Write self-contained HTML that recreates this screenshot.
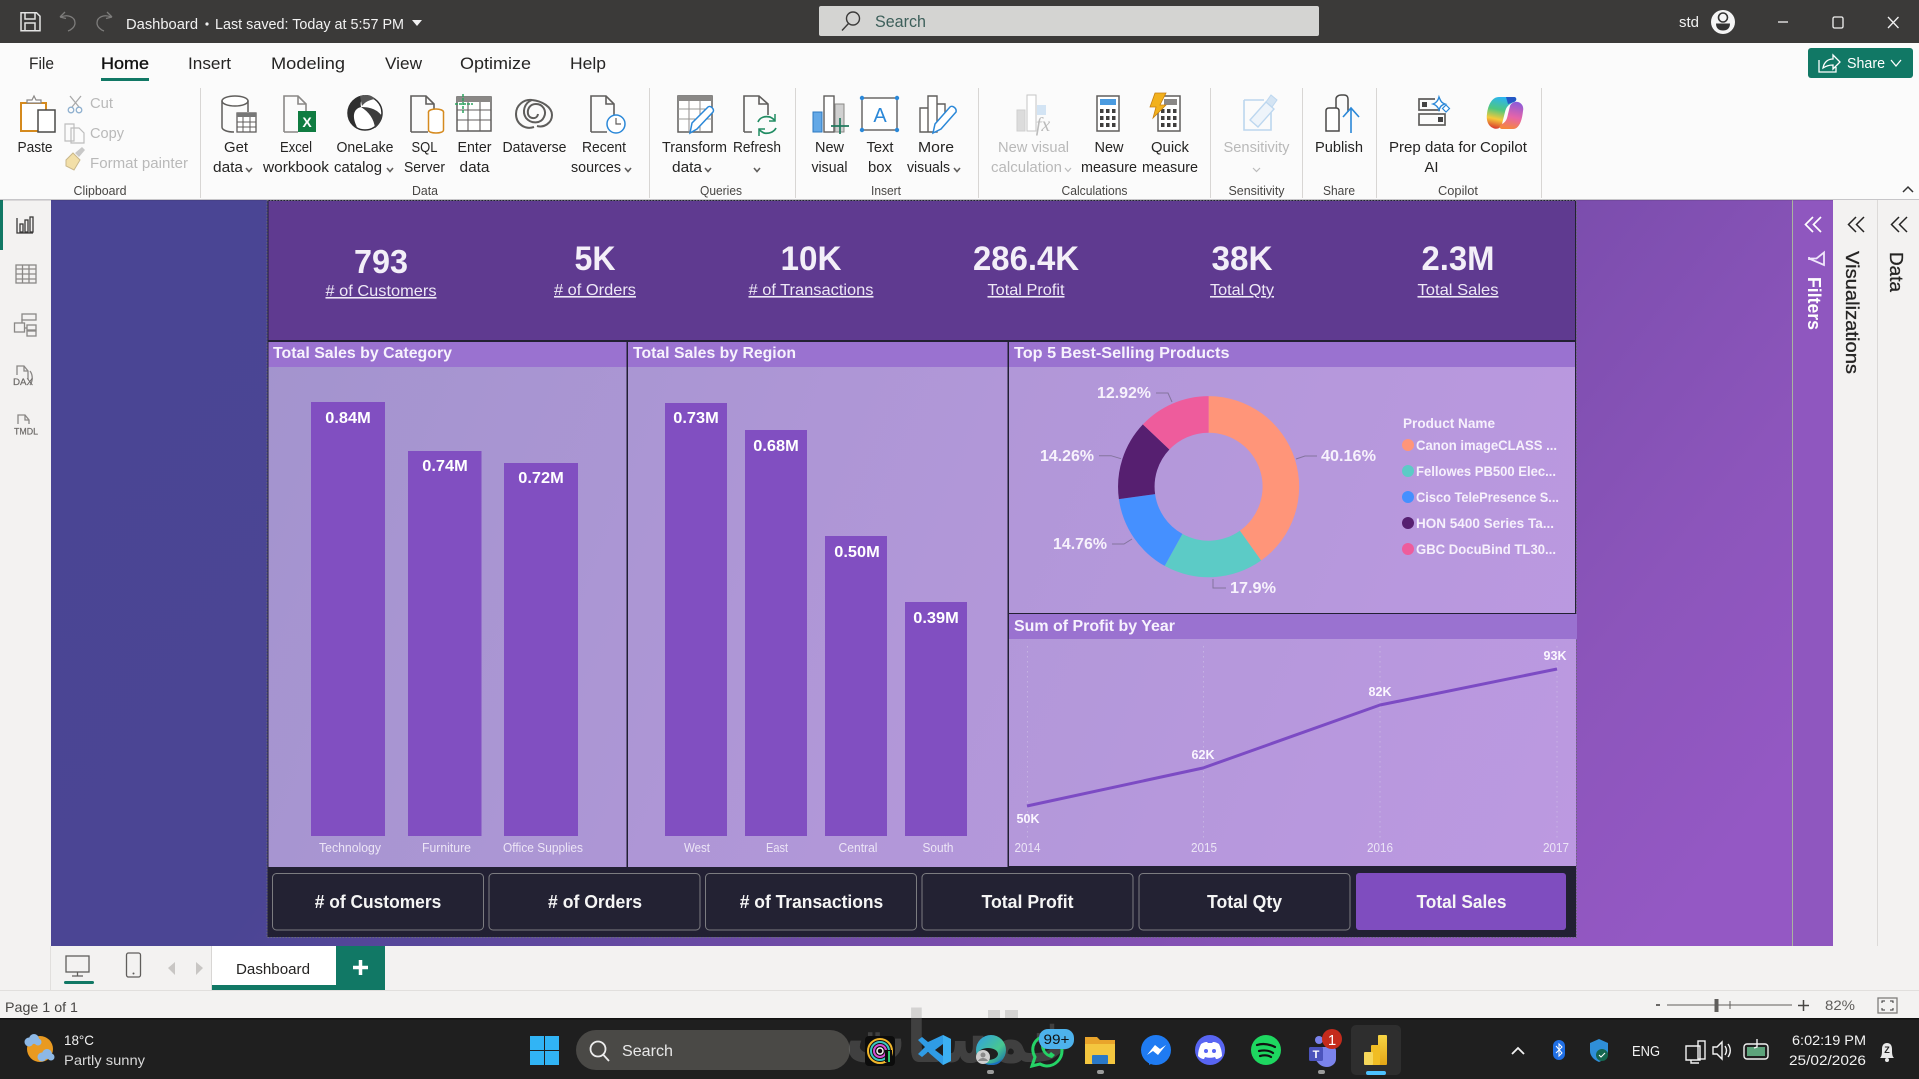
<!DOCTYPE html>
<html lang="en">
<head>
<meta charset="utf-8">
<title>Dashboard - Power BI Desktop</title>
<style>
html,body{margin:0;padding:0;width:1919px;height:1079px;overflow:hidden;background:#f3f2f1}
svg{display:block;position:absolute;left:0;top:0}
text{font-family:"Liberation Sans","DejaVu Sans",sans-serif}
.r{font-size:14.5px;fill:#252423}
.m{text-anchor:middle}
.d{fill:#b9b9b9}
.g{font-size:13px;fill:#484644;text-anchor:middle}
.tab{font-size:17px;fill:#252423}
.w{fill:#fff}
.kv{font-size:34px;font-weight:bold;fill:#f3eff8;text-anchor:middle}
.kl{font-size:16px;fill:#eee8f6;text-anchor:middle;text-decoration:underline}
.pt{font-size:15.5px;font-weight:bold;fill:#f7f2fd}
.bl{font-size:16px;font-weight:bold;fill:#fff;text-anchor:middle}
.ax{font-size:12.5px;fill:#ece5f6;text-anchor:middle}
.dl{font-size:16px;font-weight:bold;fill:#f7f2fc}
.lg{font-size:13.5px;font-weight:bold;fill:#f6f0fc}
.ll{font-size:13px;font-weight:bold;fill:#fbf7ff;text-anchor:middle}
.btn{font-size:18px;font-weight:bold;fill:#f5f5f5;text-anchor:middle}
.tb{font-size:14.5px;fill:#f2f2f2}
.i{fill:none;stroke:#605e5c;stroke-width:1.6}
.il{fill:none;stroke:#c4c4c4;stroke-width:1.4}
.ic{fill:none;stroke:#6d6b69;stroke-width:1.4}
.tr{fill:none;stroke:#f2f2f2;stroke-width:1.4}
</style>
</head>
<body>
<svg xmlns="http://www.w3.org/2000/svg" width="1919" height="1079" viewBox="0 0 1919 1079">
<defs>
<linearGradient id="cv" gradientUnits="userSpaceOnUse" x1="0" y1="0" x2="1492" y2="1164">
<stop offset="0" stop-color="#4a4594"/><stop offset=".4" stop-color="#4b4594"/><stop offset=".72" stop-color="#7b4dad"/><stop offset=".88" stop-color="#8c55bb"/><stop offset="1" stop-color="#9458c4"/>
</linearGradient>
<linearGradient id="bd" gradientUnits="userSpaceOnUse" x1="268" y1="342" x2="1576" y2="866">
<stop offset="0" stop-color="#a394ce"/><stop offset=".5" stop-color="#b197d8"/><stop offset="1" stop-color="#bc99e1"/>
</linearGradient>
<linearGradient id="pb" x1="0" y1="0" x2="0" y2="1"><stop offset="0" stop-color="#f6d444"/><stop offset="1" stop-color="#e3a516"/></linearGradient>
<linearGradient id="cp1" x1=".5" y1="0" x2=".3" y2="1"><stop offset="0" stop-color="#2bb4f2"/><stop offset=".4" stop-color="#4fc77f"/><stop offset=".7" stop-color="#f6c93a"/><stop offset="1" stop-color="#d8382f"/></linearGradient>
<linearGradient id="cp2" x1=".6" y1="0" x2=".4" y2="1"><stop offset="0" stop-color="#8d5bd8"/><stop offset=".55" stop-color="#e764a8"/><stop offset="1" stop-color="#f5873d"/></linearGradient>
<linearGradient id="ed" x1="0" y1="0" x2="1" y2="1"><stop offset="0" stop-color="#2f9fe6"/><stop offset=".6" stop-color="#48c78f"/><stop offset="1" stop-color="#1463b0"/></linearGradient>
</defs>

<!-- Title bar -->
<rect x="0" y="0" width="1919" height="43" fill="#3b3a39"/>
<g fill="none" stroke="#e3e3e3" stroke-width="1.5">
<path d="M21 12.7h15.5l3.5 3.5v14.6H21z"/><path d="M25 13v6h10v-6"/><path d="M25 31v-8h10v8"/>
</g>
<g fill="none" stroke="#7d7c7b" stroke-width="1.3">
<path d="M60 17l5-5M60 17l6 1.500M61 17c7-3 14 0 14 6 0 4-4 7-7 8"/>
<path d="M112 17l-5-5M112 17l-6 1.500M111 17c-7-3-14 0-14 6 0 4 4 7 7 8"/>
</g>
<text x="126" y="29" class="tb" textLength="72" lengthAdjust="spacingAndGlyphs">Dashboard</text>
<circle cx="207" cy="24" r="1.600" fill="#f2f2f2"/>
<text x="215" y="29" class="tb" textLength="189" lengthAdjust="spacingAndGlyphs">Last saved: Today at 5:57 PM</text>
<polygon points="412,20 422,20 417,26" fill="#f2f2f2"/>

<rect x="819" y="6" width="500" height="30" rx="2" fill="#d4d4d2"/>
<circle cx="853" cy="18.500" r="6.500" fill="none" stroke="#3b3a39" stroke-width="1.4"/>
<path d="M848.500 23.500L842 30.500" stroke="#3b3a39" stroke-width="1.4"/>
<text x="875" y="27" font-size="16.5" fill="#3d5f5a" textLength="51" lengthAdjust="spacingAndGlyphs">Search</text>

<text x="1679" y="27" class="tb" textLength="20" lengthAdjust="spacingAndGlyphs">std</text>
<circle cx="1723" cy="22" r="12" fill="#f5f5f5"/>
<circle cx="1723" cy="17.500" r="4.500" fill="none" stroke="#333" stroke-width="1.600"/>
<path d="M1716 23.500h14c0 5-3 7-7 7s-7-2-7-7z" fill="#333"/>
<path d="M1778 22h10" stroke="#f2f2f2" stroke-width="1.300"/>
<rect x="1833" y="17" width="10" height="11" rx="1.500" fill="none" stroke="#f2f2f2" stroke-width="1.300"/>
<path d="M1888 17l10.500 11M1898.500 17l-10.500 11" stroke="#f2f2f2" stroke-width="1.300"/>

<!-- Ribbon -->
<rect x="0" y="43" width="1919" height="157" fill="#fbfbfb"/>
<text x="29" y="69" class="tab" textLength="25" lengthAdjust="spacingAndGlyphs">File</text>
<text x="101" y="69" class="tab" style="fill:#111;stroke:#111;stroke-width:.35" textLength="48" lengthAdjust="spacingAndGlyphs">Home</text>
<rect x="101" y="78" width="48" height="3" fill="#117865"/>
<text x="188" y="69" class="tab" textLength="43" lengthAdjust="spacingAndGlyphs">Insert</text>
<text x="271" y="69" class="tab" textLength="74" lengthAdjust="spacingAndGlyphs">Modeling</text>
<text x="385" y="69" class="tab" textLength="37" lengthAdjust="spacingAndGlyphs">View</text>
<text x="460" y="69" class="tab" textLength="71" lengthAdjust="spacingAndGlyphs">Optimize</text>
<text x="570" y="69" class="tab" textLength="36" lengthAdjust="spacingAndGlyphs">Help</text>

<rect x="1808" y="48" width="105" height="30" rx="3" fill="#117865"/>
<path d="M1819 60v12h17v-5M1823 68c1-6 5-9 10-9v-4l7 7-7 7v-4c-4 0-7 1-10 3z" fill="none" stroke="#fff" stroke-width="1.300"/>
<text x="1847" y="68" font-size="14.5" fill="#fff" textLength="38" lengthAdjust="spacingAndGlyphs">Share</text>
<path d="M1891 60l5 6 5-6" fill="none" stroke="#fff" stroke-width="1.300"/>

<!-- ribbon separators -->
<g fill="#d8d6d4">
<rect x="200" y="88" width="1" height="110"/><rect x="649" y="88" width="1" height="110"/><rect x="795" y="88" width="1" height="110"/><rect x="978" y="88" width="1" height="110"/><rect x="1210" y="88" width="1" height="110"/><rect x="1302" y="88" width="1" height="110"/><rect x="1376" y="88" width="1" height="110"/><rect x="1541" y="88" width="1" height="110"/>
</g>

<!-- Paste -->
<path d="M21 103h25v28H21z" fill="#fff" stroke="#d58a1e" stroke-width="2"/>
<path d="M27 103v-3h5l2-4 2 4h5v3z" fill="#fff" stroke="#8a8886" stroke-width="1.200"/>
<rect x="38" y="110" width="17" height="22" fill="#fff" stroke="#4b4a49" stroke-width="1.500"/>
<text x="35" y="152" class="r m" textLength="35" lengthAdjust="spacingAndGlyphs">Paste</text>
<!-- Cut/Copy/Painter -->
<path d="M70 96l9 11M81 96l-9 11" stroke="#a9a9a9" stroke-width="1.300" fill="none"/>
<circle cx="71" cy="110" r="2.800" fill="none" stroke="#8fb0cf" stroke-width="1.300"/><circle cx="79" cy="110" r="2.800" fill="none" stroke="#8fb0cf" stroke-width="1.300"/>
<text x="90" y="108" class="r d" textLength="23" lengthAdjust="spacingAndGlyphs">Cut</text>
<path d="M65 124h9v17h-9zM71 128h8l5 5v10H71z" fill="#fbfbfb" stroke="#bdbdbd" stroke-width="1.200"/>
<text x="90" y="138" class="r d" textLength="34" lengthAdjust="spacingAndGlyphs">Copy</text>
<path d="M66 160l7-7 7 7-6 10-8-4z" fill="#f2dfa8" stroke="#c9b78a" stroke-width="1"/><path d="M75 153l7-6 3 3-6 7z" fill="#c8c8c8"/>
<text x="90" y="168" class="r d" textLength="98" lengthAdjust="spacingAndGlyphs">Format painter</text>
<text x="100" y="195" class="g" textLength="53" lengthAdjust="spacingAndGlyphs">Clipboard</text>

<!-- Get data -->
<ellipse cx="235" cy="101" rx="13" ry="5" fill="#fff" stroke="#605e5c" stroke-width="1.500"/>
<path d="M222 101v26c0 3 5 5 12 5M248 101v11" fill="none" stroke="#605e5c" stroke-width="1.500"/>
<rect x="237" y="113" width="19" height="19" fill="#fff" stroke="#605e5c" stroke-width="1.300"/>
<rect x="237" y="113" width="19" height="4" fill="#777"/>
<path d="M237 122h19M237 127h19M243 117v15M250 117v15" stroke="#605e5c" stroke-width="1"/>
<text x="236" y="152" class="r m" textLength="24" lengthAdjust="spacingAndGlyphs">Get</text>
<text x="213" y="172" class="r" textLength="30" lengthAdjust="spacingAndGlyphs">data</text>
<path d="M246 168l3 3.500 3-3.500" class="i" stroke-width="1.200"/>
<!-- Excel -->
<path d="M284 132V96h14l8 8v8M284 132h14" class="i" style="stroke:#8a8886"/><path d="M298 96v8h8" class="i" style="stroke:#8a8886"/>
<rect x="298" y="111" width="18" height="21" fill="#107c41"/>
<text x="307" y="127" font-size="14" font-weight="bold" class="m w">X</text>
<text x="296" y="152" class="r m" textLength="32" lengthAdjust="spacingAndGlyphs">Excel</text>
<text x="296" y="172" class="r m" textLength="66" lengthAdjust="spacingAndGlyphs">workbook</text>
<!-- OneLake -->
<circle cx="365" cy="113" r="17" fill="#fff" stroke="#2d2d2d" stroke-width="1.500"/>
<path d="M348 113c0-10 8-17 16-18-3 5-4 8-3 12-8 2-9 10-4 20-6-2-9-8-9-14z" fill="#2f2f2f"/>
<path d="M361 107c8 0 16 2 21 9-1 5-3 9-7 12-1-9-6-16-14-21z" fill="#3d3d3d"/>
<path d="M360 96c8-2 11-1 15 3-6 1-10 3-13 7z" fill="#555"/>
<text x="365" y="152" class="r m" textLength="57" lengthAdjust="spacingAndGlyphs">OneLake</text>
<text x="334" y="172" class="r" textLength="48" lengthAdjust="spacingAndGlyphs">catalog</text>
<path d="M387 168l3 3.500 3-3.500" class="i" stroke-width="1.200"/>
<!-- SQL -->
<path d="M411 132V96h15l8 8v8M411 132h17" class="i"/><path d="M426 96v8h8" class="i"/>
<ellipse cx="436" cy="112" rx="7.500" ry="3" fill="#fff" stroke="#d58a1e" stroke-width="1.500"/>
<path d="M428.500 112v18c0 2 3.500 3 7.500 3s7.500-1 7.500-3v-18" fill="#fff" stroke="#d58a1e" stroke-width="1.500"/>
<text x="424.500" y="152" class="r m" textLength="26" lengthAdjust="spacingAndGlyphs">SQL</text>
<text x="424.500" y="172" class="r m" textLength="41" lengthAdjust="spacingAndGlyphs">Server</text>
<!-- Enter data -->
<rect x="457" y="97" width="34" height="34" fill="#fff" stroke="#605e5c" stroke-width="1.500"/>
<rect x="457" y="97" width="34" height="5" fill="#8a8886"/>
<path d="M457 110h34M457 120h34M468 102v29M480 102v29" stroke="#605e5c" stroke-width="1.100"/>
<path d="M463 94v20M455 104h18" stroke="#2ca25f" stroke-width="1.500" stroke-dasharray="3 1"/>
<text x="474.500" y="152" class="r m" textLength="34" lengthAdjust="spacingAndGlyphs">Enter</text>
<text x="474.500" y="172" class="r m" textLength="30" lengthAdjust="spacingAndGlyphs">data</text>
<!-- Dataverse -->
<g fill="none" stroke="#5e5d5b" stroke-width="2">
<path d="M534 127c-9 3-18-3-18-13 0-9 8-15 16-14 10 1 20 7 20 15 0 8-8 13-15 11"/>
<path d="M532 100c-8 3-10 12-6 18 5 6 15 6 18-1 3-6-1-13-8-13-6 0-9 5-8 10 1 5 9 6 10 0"/>
</g>
<text x="534.500" y="152" class="r m" textLength="64" lengthAdjust="spacingAndGlyphs">Dataverse</text>
<!-- Recent -->
<path d="M591 132V96h15l8 8v13M591 132h16" class="i"/><path d="M606 96v8h8" class="i"/>
<circle cx="616" cy="124" r="9" fill="#fff" stroke="#2b88d8" stroke-width="1.500"/>
<path d="M616 118v6h5" stroke="#605e5c" stroke-width="1.200" fill="none"/>
<text x="604" y="152" class="r m" textLength="44" lengthAdjust="spacingAndGlyphs">Recent</text>
<text x="571" y="172" class="r" textLength="50" lengthAdjust="spacingAndGlyphs">sources</text>
<path d="M625 168l3 3.500 3-3.500" class="i" stroke-width="1.200"/>
<!-- Transform -->
<rect x="678" y="96" width="34" height="36" fill="#fff" stroke="#605e5c" stroke-width="1.500"/>
<rect x="678" y="96" width="34" height="5" fill="#8a8886"/>
<path d="M678 109h34M678 119h34M689 101v30M700 101v30" stroke="#9a9896" stroke-width="1.100"/>
<path d="M690 133l2-10 16-16c2-2 7 2 5 5l-16 17z" fill="#fff" stroke="#2b88d8" stroke-width="1.500"/>
<text x="694.500" y="152" class="r m" textLength="65" lengthAdjust="spacingAndGlyphs">Transform</text>
<text x="687" y="172" class="r m" textLength="30" lengthAdjust="spacingAndGlyphs">data</text>
<path d="M705 168l3 3.500 3-3.500" class="i" stroke-width="1.200"/>
<!-- Refresh -->
<path d="M744 132V96h15l9 8v11M744 132h8" class="i"/><path d="M759 96v8h9" class="i"/>
<path d="M758 122c2-5 7-6 12-5 2 1 4 2 5 4M776 128c-2 4-7 6-12 5-2-1-4-2-5-4" fill="none" stroke="#218c63" stroke-width="1.700"/>
<path d="M775 114v7h-6M759 136v-7h6" fill="none" stroke="#218c63" stroke-width="1.500"/>
<text x="757" y="152" class="r m" textLength="48" lengthAdjust="spacingAndGlyphs">Refresh</text>
<path d="M754 168l3 3.500 3-3.500" class="i" stroke-width="1.200"/>
<text x="425" y="195" class="g" textLength="26" lengthAdjust="spacingAndGlyphs">Data</text>
<text x="721" y="195" class="g" textLength="42" lengthAdjust="spacingAndGlyphs">Queries</text>

<!-- New visual -->
<rect x="813" y="112" width="9" height="20" fill="#63a8e6" stroke="#2b79c2"/>
<rect x="824" y="96" width="10" height="36" fill="#fff" stroke="#605e5c" stroke-width="1.400"/>
<rect x="835" y="104" width="9" height="28" fill="#d0d0d0" stroke="#8a8886"/>
<path d="M840 118v16M831 126h18" stroke="#217a5e" stroke-width="1.700"/>
<text x="829.500" y="152" class="r m" textLength="29" lengthAdjust="spacingAndGlyphs">New</text>
<text x="829.500" y="172" class="r m" textLength="36" lengthAdjust="spacingAndGlyphs">visual</text>
<!-- Text box -->
<rect x="862" y="98" width="35" height="32" fill="#fff" stroke="#605e5c" stroke-width="1.400"/>
<g fill="#2b88d8"><circle cx="862" cy="98" r="2.200"/><circle cx="897" cy="98" r="2.200"/><circle cx="862" cy="130" r="2.200"/><circle cx="897" cy="130" r="2.200"/></g>
<text x="880" y="122" font-size="20" fill="#2b88d8" class="m">A</text>
<text x="880" y="152" class="r m" textLength="27" lengthAdjust="spacingAndGlyphs">Text</text>
<text x="880" y="172" class="r m" textLength="24" lengthAdjust="spacingAndGlyphs">box</text>
<!-- More visuals -->
<path d="M920 132v-24h8v24zM928 132V96h9v36zM937 132v-28h8v14" fill="#fff" stroke="#605e5c" stroke-width="1.400"/>
<path d="M933 133l2-9 15-17c2-2 7 1 6 5l-15 17z" fill="#fff" stroke="#2b88d8" stroke-width="1.500"/>
<text x="936" y="152" class="r m" textLength="36" lengthAdjust="spacingAndGlyphs">More</text>
<text x="907" y="172" class="r" textLength="43" lengthAdjust="spacingAndGlyphs">visuals</text>
<path d="M954 168l3 3.500 3-3.500" class="i" stroke-width="1.200"/>
<text x="886" y="195" class="g" textLength="30" lengthAdjust="spacingAndGlyphs">Insert</text>
<!-- New visual calc -->
<rect x="1017" y="110" width="8" height="21" fill="#dcdcdc" stroke="#cfcfcf"/>
<rect x="1027" y="95" width="9" height="36" fill="#fff" stroke="#c6c6c6"/>
<rect x="1037" y="105" width="9" height="10" fill="#d3e4f4"/>
<text x="1043" y="131" font-size="20" font-style="italic" fill="#bcbcbc" class="m" style="font-family:'Liberation Serif',serif">fx</text>
<text x="1033.500" y="152" class="r m d" textLength="71" lengthAdjust="spacingAndGlyphs">New visual</text>
<text x="991" y="172" class="r d" textLength="71" lengthAdjust="spacingAndGlyphs">calculation</text>
<path d="M1065 168l3 3.500 3-3.500" fill="none" stroke="#bbb" stroke-width="1.200"/>
<!-- New measure -->
<rect x="1097" y="96" width="22" height="35" fill="#fff" stroke="#605e5c" stroke-width="1.500"/>
<rect x="1100" y="99" width="16" height="6" fill="#4a9be0"/>
<g fill="#3f3e3d"><rect x="1100" y="109" width="3.500" height="4"/><rect x="1106" y="109" width="3.500" height="4"/><rect x="1112" y="109" width="3.500" height="4"/><rect x="1100" y="116" width="3.500" height="4"/><rect x="1106" y="116" width="3.500" height="4"/><rect x="1112" y="116" width="3.500" height="4"/><rect x="1100" y="123" width="3.500" height="4"/><rect x="1106" y="123" width="3.500" height="4"/><rect x="1112" y="123" width="3.500" height="4"/></g>
<text x="1109" y="152" class="r m" textLength="29" lengthAdjust="spacingAndGlyphs">New</text>
<text x="1109" y="172" class="r m" textLength="56" lengthAdjust="spacingAndGlyphs">measure</text>
<!-- Quick measure -->
<rect x="1158" y="96" width="22" height="35" fill="#fff" stroke="#605e5c" stroke-width="1.500"/>
<rect x="1164" y="99" width="13" height="6" fill="#8a8886"/>
<g fill="#3f3e3d"><rect x="1161" y="109" width="3.500" height="4"/><rect x="1167" y="109" width="3.500" height="4"/><rect x="1173" y="109" width="3.500" height="4"/><rect x="1161" y="116" width="3.500" height="4"/><rect x="1167" y="116" width="3.500" height="4"/><rect x="1173" y="116" width="3.500" height="4"/><rect x="1161" y="123" width="3.500" height="4"/><rect x="1167" y="123" width="3.500" height="4"/><rect x="1173" y="123" width="3.500" height="4"/></g>
<polygon points="1155,93 1166,93 1160,105 1166,105 1153,118 1156,107 1150,107" fill="#f2b11d" stroke="#c77f0f" stroke-width=".8"/>
<text x="1170" y="152" class="r m" textLength="38" lengthAdjust="spacingAndGlyphs">Quick</text>
<text x="1170" y="172" class="r m" textLength="56" lengthAdjust="spacingAndGlyphs">measure</text>
<text x="1094.500" y="195" class="g" textLength="66" lengthAdjust="spacingAndGlyphs">Calculations</text>
<!-- Sensitivity -->
<path d="M1244 100h20M1244 100v30h27v-18" fill="none" stroke="#bcd6ee" stroke-width="1.600"/>
<path d="M1250 120l16-18 8 7-16 18z" fill="#eef4fa" stroke="#bdd7ef" stroke-width="1.400"/>
<path d="M1266 102l5-7 6 5-5 7z" fill="#d4e4f3" stroke="#bdd7ef"/>
<text x="1256.500" y="152" class="r m d" textLength="66" lengthAdjust="spacingAndGlyphs">Sensitivity</text>
<path d="M1253 168l3.500 3.500 3.500-3.500" fill="none" stroke="#bbb" stroke-width="1.200"/>
<text x="1256.500" y="195" class="g" textLength="56" lengthAdjust="spacingAndGlyphs">Sensitivity</text>
<!-- Publish -->
<path d="M1326 131v-20c0-2 1-3 3-3h7c2 0 3 1 3 3v20z" fill="#fff" stroke="#4a4948" stroke-width="1.500"/>
<path d="M1336 108V99c0-2 2-4 5-4h3c3 0 4 2 4 4v13" fill="none" stroke="#4a4948" stroke-width="1.500"/>
<path d="M1351 133v-24M1343 117l8-9 8 9" fill="none" stroke="#2b88d8" stroke-width="1.600"/>
<text x="1339" y="152" class="r m" textLength="48" lengthAdjust="spacingAndGlyphs">Publish</text>
<text x="1339" y="195" class="g" textLength="32" lengthAdjust="spacingAndGlyphs">Share</text>
<!-- Prep data -->
<path d="M1435 99h-16v11h21" fill="none" stroke="#605e5c" stroke-width="1.700"/><rect x="1422" y="102" width="5" height="5" fill="#444"/>
<rect x="1419" y="114" width="26" height="11" fill="none" stroke="#605e5c" stroke-width="1.700"/><rect x="1438" y="117" width="5" height="5" fill="#444"/>
<path d="M1439 97c2 5 3 6 6 7-4 1-5 3-6 6-1-3-3-5-6-6 3-1 5-3 6-7z" fill="#fff" stroke="#2b88d8" stroke-width="1.400"/>
<path d="M1446 105l3.500 3.500-3.500 3.500-3.500-3.500z" fill="#fff" stroke="#2b88d8" stroke-width="1.200"/>
<text x="1389" y="152" class="r" textLength="87" lengthAdjust="spacingAndGlyphs">Prep data for</text>
<text x="1431.500" y="172" class="r m" textLength="14" lengthAdjust="spacingAndGlyphs">AI</text>
<!-- Copilot -->
<path d="M1499 97h15c3 0 3 4 0 5-5 2-8 5-9 10l-3 12c-1 4-5 6-9 4-5-2-7-8-6-14 1-9 5-17 12-17z" fill="url(#cp1)"/>
<path d="M1513 129h-11c-3 0-3-4 0-5 4-2 5-5 6-10l2-8c1-3 5-5 8-4 4 1 6 5 5 9-1 10-4 18-10 18z" fill="url(#cp2)"/>
<path d="M1506 97h8c3 0 3 4 0 5l-6 2z" fill="#2457c5"/>
<text x="1480" y="152" class="r" textLength="47" lengthAdjust="spacingAndGlyphs">Copilot</text>
<text x="1458" y="195" class="g" textLength="40" lengthAdjust="spacingAndGlyphs">Copilot</text>
<path d="M1903 192l5-5 5 5" fill="none" stroke="#333" stroke-width="1.500"/>

<!-- Left rail -->
<rect x="0" y="200" width="51" height="746" fill="#f3f2f1"/>
<rect x="0" y="200" width="3" height="50" fill="#117865"/>
<g fill="none" stroke="#3b3a39" stroke-width="1.300">
<path d="M17 218v15h16"/><rect x="20" y="224" width="3" height="8"/><rect x="25" y="220" width="3" height="12"/><rect x="30" y="217" width="3" height="15"/>
</g>
<g style="fill:none;stroke:#8a8886;stroke-width:1.300">
<rect x="16" y="265" width="20" height="18"/><path d="M16 269h20M16 274h20M16 279h20M22.500 265v18M29 265v18"/>
<rect x="22" y="314" width="14" height="6"/><rect x="14.500" y="323" width="10" height="9"/><rect x="27" y="325" width="9" height="5"/><rect x="27" y="331" width="9" height="5"/><path d="M22 319v4M24 328h3"/>
<path d="M17 375v-9h7l4 5v8"/><path d="M24 366v5h4"/><path d="M30 371c3 4 3 10 0 14"/>
<path d="M18 424v-9h7l4 5v4"/><path d="M25 415v5h4"/>
</g>
<text x="13" y="385" font-size="9" fill="#6d6b69" stroke="#6d6b69" stroke-width=".2" textLength="20" lengthAdjust="spacingAndGlyphs">DAX</text>
<text x="14" y="434.500" font-size="9" fill="#6d6b69" stroke="#6d6b69" stroke-width=".2" textLength="24" lengthAdjust="spacingAndGlyphs">TMDL</text>

<!-- Canvas -->
<rect x="51" y="200" width="1741" height="746" fill="url(#cv)"/>
<rect x="1792" y="200" width="41" height="746" fill="#8f57bf"/>
<rect x="1792" y="200" width="1" height="746" fill="#a9b59d"/>
<rect x="0" y="199" width="1919" height="1.500" fill="#2b2734" opacity=".25"/>

<!-- Right panes -->
<rect x="1833" y="200" width="86" height="746" fill="#f3f2f1"/>
<rect x="1877" y="200" width="1" height="746" fill="#dcdad8"/>
<path d="M1813 217l-7.500 7.500 7.500 7.500M1821 217l-7.500 7.500 7.500 7.500" fill="none" stroke="#fff" stroke-width="1.700"/>
<path d="M1809 258.500h7.500l7.500-6v12.500z" fill="none" stroke="#f0e6fb" stroke-width="1.800"/>
<path d="M1809 257v3" stroke="#f0e6fb" stroke-width="1.800"/>
<text transform="translate(1808,277) rotate(90)" font-size="18" font-weight="bold" fill="#fff" textLength="53" lengthAdjust="spacingAndGlyphs">Filters</text>
<path d="M1856 217l-7.500 7.500 7.500 7.500M1864 217l-7.500 7.500 7.500 7.500" fill="none" stroke="#252423" stroke-width="1.500"/>
<text transform="translate(1846,251) rotate(90)" font-size="18" fill="#252423" stroke="#252423" stroke-width=".3" textLength="123" lengthAdjust="spacingAndGlyphs">Visualizations</text>
<path d="M1899 217l-7.500 7.500 7.500 7.500M1907 217l-7.500 7.500 7.500 7.500" fill="none" stroke="#252423" stroke-width="1.500"/>
<text transform="translate(1890,252) rotate(90)" font-size="18" fill="#252423" stroke="#252423" stroke-width=".3" textLength="40" lengthAdjust="spacingAndGlyphs">Data</text>

<!-- Report page -->
<rect x="267.500" y="200" width="1308.500" height="737" fill="#222033"/>
<rect x="267" y="200.500" width="1309.500" height="737" fill="none" stroke="#6a6a7a" stroke-width="1" stroke-dasharray="1.500 1.500"/>
<rect x="268.500" y="201" width="1306.500" height="139" fill="#5f3a90"/>

<text x="381" y="273" class="kv" style="font-size:33px" textLength="54" lengthAdjust="spacingAndGlyphs">793</text>
<text x="381" y="296" class="kl" textLength="111" lengthAdjust="spacingAndGlyphs"># of Customers</text>
<text x="595" y="270" class="kv" textLength="41" lengthAdjust="spacingAndGlyphs">5K</text>
<text x="595" y="295" class="kl" textLength="82" lengthAdjust="spacingAndGlyphs"># of Orders</text>
<text x="811" y="270" class="kv" textLength="61" lengthAdjust="spacingAndGlyphs">10K</text>
<text x="811" y="295" class="kl" textLength="125" lengthAdjust="spacingAndGlyphs"># of Transactions</text>
<text x="1026" y="270" class="kv" textLength="106" lengthAdjust="spacingAndGlyphs">286.4K</text>
<text x="1026" y="295" class="kl" textLength="77" lengthAdjust="spacingAndGlyphs">Total Profit</text>
<text x="1242" y="270" class="kv" textLength="61" lengthAdjust="spacingAndGlyphs">38K</text>
<text x="1242" y="295" class="kl" textLength="64" lengthAdjust="spacingAndGlyphs">Total Qty</text>
<text x="1458" y="270" class="kv" textLength="73" lengthAdjust="spacingAndGlyphs">2.3M</text>
<text x="1458" y="295" class="kl" textLength="81" lengthAdjust="spacingAndGlyphs">Total Sales</text>

<!-- panels -->
<rect x="268.500" y="342" width="358" height="525" fill="url(#bd)"/>
<rect x="628" y="342" width="379.500" height="525" fill="url(#bd)"/>
<rect x="1009" y="342" width="566" height="271" fill="url(#bd)"/>
<rect x="1009" y="614" width="567" height="252" fill="url(#bd)"/>
<g fill="#9a72d0">
<rect x="268.500" y="342" width="358" height="25"/><rect x="628" y="342" width="379.500" height="25"/><rect x="1009" y="342" width="566" height="25"/><rect x="1009" y="614" width="568" height="25"/>
</g>
<text x="273" y="358" class="pt" textLength="179" lengthAdjust="spacingAndGlyphs">Total Sales by Category</text>
<text x="633" y="358" class="pt" textLength="163" lengthAdjust="spacingAndGlyphs">Total Sales by Region</text>
<text x="1014" y="358" class="pt" textLength="215.500" lengthAdjust="spacingAndGlyphs">Top 5 Best-Selling Products</text>
<text x="1014" y="631" class="pt" textLength="161" lengthAdjust="spacingAndGlyphs">Sum of Profit by Year</text>

<!-- Bars -->
<g fill="#814fc1">
<rect x="311" y="402" width="74" height="434"/><rect x="408" y="451" width="73.500" height="385"/><rect x="504" y="463" width="74" height="373"/>
<rect x="665" y="403" width="62" height="433"/><rect x="745" y="430" width="62" height="406"/><rect x="825" y="536" width="62" height="300"/><rect x="905" y="602" width="62" height="234"/>
</g>
<text x="348" y="423" class="bl" textLength="45.500" lengthAdjust="spacingAndGlyphs">0.84M</text>
<text x="445" y="471" class="bl" textLength="45.500" lengthAdjust="spacingAndGlyphs">0.74M</text>
<text x="541" y="483" class="bl" textLength="45.500" lengthAdjust="spacingAndGlyphs">0.72M</text>
<text x="696" y="423" class="bl" textLength="45.500" lengthAdjust="spacingAndGlyphs">0.73M</text>
<text x="776" y="451" class="bl" textLength="45.500" lengthAdjust="spacingAndGlyphs">0.68M</text>
<text x="857" y="557" class="bl" textLength="45.500" lengthAdjust="spacingAndGlyphs">0.50M</text>
<text x="936" y="623" class="bl" textLength="45.500" lengthAdjust="spacingAndGlyphs">0.39M</text>
<text x="350" y="852" class="ax" textLength="62" lengthAdjust="spacingAndGlyphs">Technology</text>
<text x="446.500" y="852" class="ax" textLength="49" lengthAdjust="spacingAndGlyphs">Furniture</text>
<text x="543" y="852" class="ax" textLength="80" lengthAdjust="spacingAndGlyphs">Office Supplies</text>
<text x="697" y="852" class="ax" textLength="26" lengthAdjust="spacingAndGlyphs">West</text>
<text x="777" y="852" class="ax" textLength="22" lengthAdjust="spacingAndGlyphs">East</text>
<text x="858" y="852" class="ax" textLength="39" lengthAdjust="spacingAndGlyphs">Central</text>
<text x="938" y="852" class="ax" textLength="31" lengthAdjust="spacingAndGlyphs">South</text>

<!-- Donut -->
<path d="M1208.600 396.100A90.600 90.600 0 0 1 1261.100 560.500L1239.900 530.700A54 54 0 0 0 1208.600 432.700Z" fill="#ff9579"/>
<path d="M1261.100 560.500A90.600 90.600 0 0 1 1164.700 565.900L1182.400 533.900A54 54 0 0 0 1239.900 530.700Z" fill="#5ccbc6"/>
<path d="M1164.700 565.900A90.600 90.600 0 0 1 1118.900 499.100L1155.100 494.100A54 54 0 0 0 1182.400 533.900Z" fill="#4590ff"/>
<path d="M1118.900 499.100A90.600 90.600 0 0 1 1142.900 424.400L1169.400 449.500A54 54 0 0 0 1155.100 494.100Z" fill="#561f70"/>
<path d="M1142.900 424.400A90.600 90.600 0 0 1 1208.600 396.100L1208.600 432.700A54 54 0 0 0 1169.400 449.500Z" fill="#ee5c9c"/>
<g fill="none" stroke="#84749e" stroke-width="1">
<path d="M1156 393h12l4 9"/><path d="M1099 455.700h12l10 3"/><path d="M1112 544h12l8-5"/><path d="M1213 579v9h13"/><path d="M1317 456h-12l-9 3"/>
</g>
<text x="1097" y="398" class="dl" textLength="54" lengthAdjust="spacingAndGlyphs">12.92%</text>
<text x="1040" y="461" class="dl" textLength="54" lengthAdjust="spacingAndGlyphs">14.26%</text>
<text x="1053" y="549" class="dl" textLength="54" lengthAdjust="spacingAndGlyphs">14.76%</text>
<text x="1230" y="593" class="dl" textLength="46" lengthAdjust="spacingAndGlyphs">17.9%</text>
<text x="1321" y="461" class="dl" textLength="55" lengthAdjust="spacingAndGlyphs">40.16%</text>
<!-- Legend -->
<text x="1403" y="428" class="lg" textLength="92" lengthAdjust="spacingAndGlyphs">Product Name</text>
<circle cx="1408" cy="445" r="6" fill="#ff9579"/><text x="1416" y="450" class="lg" textLength="141" lengthAdjust="spacingAndGlyphs">Canon imageCLASS ...</text>
<circle cx="1408" cy="471" r="6" fill="#5ccbc6"/><text x="1416" y="476" class="lg" textLength="140" lengthAdjust="spacingAndGlyphs">Fellowes PB500 Elec...</text>
<circle cx="1408" cy="497" r="6" fill="#4590ff"/><text x="1416" y="502" class="lg" textLength="143" lengthAdjust="spacingAndGlyphs">Cisco TelePresence S...</text>
<circle cx="1408" cy="523" r="6" fill="#561f70"/><text x="1416" y="528" class="lg" textLength="138" lengthAdjust="spacingAndGlyphs">HON 5400 Series Ta...</text>
<circle cx="1408" cy="549" r="6" fill="#ee5c9c"/><text x="1416" y="554" class="lg" textLength="140" lengthAdjust="spacingAndGlyphs">GBC DocuBind TL30...</text>

<!-- Line chart -->
<g stroke="#cfc2e6" stroke-width="1" stroke-dasharray="1.500 3.500" opacity=".65">
<path d="M1027.500 646V838M1203.500 646V838M1380 646V838M1557 646V838"/>
</g>
<polyline points="1027,806 1203,768 1380,705 1557,669" fill="none" stroke="#7c4bc4" stroke-width="3" stroke-linejoin="round"/>
<text x="1028" y="823" class="ll" textLength="23" lengthAdjust="spacingAndGlyphs">50K</text>
<text x="1203" y="759" class="ll" textLength="23" lengthAdjust="spacingAndGlyphs">62K</text>
<text x="1380" y="696" class="ll" textLength="23" lengthAdjust="spacingAndGlyphs">82K</text>
<text x="1555" y="660" class="ll" textLength="23" lengthAdjust="spacingAndGlyphs">93K</text>
<text x="1027.500" y="852" class="ax" textLength="26" lengthAdjust="spacingAndGlyphs">2014</text>
<text x="1204" y="852" class="ax" textLength="26" lengthAdjust="spacingAndGlyphs">2015</text>
<text x="1380" y="852" class="ax" textLength="26" lengthAdjust="spacingAndGlyphs">2016</text>
<text x="1556" y="852" class="ax" textLength="26" lengthAdjust="spacingAndGlyphs">2017</text>

<!-- Buttons -->
<g fill="#232233" stroke="#7c7c80" stroke-width="1">
<rect x="272.500" y="873.500" width="211" height="56.500" rx="4"/>
<rect x="489" y="873.500" width="211" height="56.500" rx="4"/>
<rect x="705.500" y="873.500" width="211" height="56.500" rx="4"/>
<rect x="922" y="873.500" width="211" height="56.500" rx="4"/>
<rect x="1139" y="873.500" width="211" height="56.500" rx="4"/>
</g>
<rect x="1356" y="873" width="210" height="57" rx="3" fill="#7f4dbf"/>
<text x="378" y="908" class="btn" textLength="126.500" lengthAdjust="spacingAndGlyphs"># of Customers</text>
<text x="595" y="908" class="btn" textLength="94" lengthAdjust="spacingAndGlyphs"># of Orders</text>
<text x="811.500" y="908" class="btn" textLength="143.500" lengthAdjust="spacingAndGlyphs"># of Transactions</text>
<text x="1027.500" y="908" class="btn" textLength="92" lengthAdjust="spacingAndGlyphs">Total Profit</text>
<text x="1244.500" y="908" class="btn" textLength="75" lengthAdjust="spacingAndGlyphs">Total Qty</text>
<text x="1461.500" y="908" class="btn" textLength="90" lengthAdjust="spacingAndGlyphs">Total Sales</text>

<!-- Page tabs -->
<rect x="0" y="946" width="1919" height="44" fill="#f3f2f1"/>
<rect x="50" y="946" width="1" height="44" fill="#e1dfdd"/>
<rect x="0" y="990" width="1919" height="1.500" fill="#e1dfdd"/>
<rect x="66" y="956" width="23" height="16" fill="none" stroke="#605e5c" stroke-width="1.300"/>
<path d="M77.500 972v4M72 976h11" stroke="#605e5c" stroke-width="1.300"/>
<rect x="64" y="981" width="30" height="3" rx="1.500" fill="#117865"/>
<rect x="126.500" y="953" width="14" height="24" rx="2" fill="none" stroke="#605e5c" stroke-width="1.300"/>
<circle cx="133.500" cy="973.500" r="1" fill="#605e5c"/>
<polygon points="175,962 168,968 175,975" fill="#c8c6c4"/>
<polygon points="196,962 203,968 196,975" fill="#c8c6c4"/>
<rect x="211" y="946" width="125" height="44" fill="#fff"/>
<rect x="211" y="985" width="125" height="5" fill="#117865"/>
<rect x="211" y="946" width="1" height="44" fill="#d8d6d4"/>
<text x="236" y="974" font-size="15" fill="#252423" textLength="74" lengthAdjust="spacingAndGlyphs">Dashboard</text>
<rect x="336" y="946" width="49" height="44" fill="#117865"/>
<path d="M360.500 960v15M353 967.500h15" stroke="#fff" stroke-width="3.500"/>

<!-- Status bar -->
<rect x="0" y="991" width="1919" height="28" fill="#f3f2f1"/>
<text x="5" y="1012" font-size="14" fill="#484644" textLength="73" lengthAdjust="spacingAndGlyphs">Page 1 of 1</text>
<path d="M1656 1005h4" stroke="#484644" stroke-width="1.600"/>
<path d="M1667 1005h125" stroke="#605e5c" stroke-width="1"/>
<rect x="1714.500" y="999" width="4" height="13" fill="#605e5c"/>
<path d="M1730 1001v8" stroke="#605e5c" stroke-width="1"/>
<path d="M1803.500 1000v11M1798 1005.500h11" stroke="#484644" stroke-width="1.500"/>
<text x="1825" y="1010" font-size="14" fill="#605e5c" textLength="30" lengthAdjust="spacingAndGlyphs">82%</text>
<rect x="1878" y="998" width="19" height="15" fill="none" stroke="#7f7d7b" stroke-width="1.300"/>
<path d="M1882 1003v-2h3M1893 1003v-2h-3M1882 1008v2h3M1893 1008v2h-3" fill="none" stroke="#333" stroke-width="1"/>

<!-- Taskbar -->
<rect x="0" y="1019" width="1919" height="60" fill="#1f1f1f"/>
<rect x="0" y="1018" width="1919" height="1.500" fill="#111"/>
<!-- Weather -->
<circle cx="40" cy="1049" r="13" fill="#e99a21"/>
<g fill="#8db8e6"><circle cx="29" cy="1042" r="4.500"/><circle cx="34" cy="1039" r="5"/><circle cx="38" cy="1042" r="3.500"/><circle cx="42" cy="1057" r="4.500"/><circle cx="47" cy="1054" r="5"/><circle cx="51" cy="1057" r="3.500"/></g>
<text x="64" y="1045" font-size="14" fill="#f0f0f0" textLength="30" lengthAdjust="spacingAndGlyphs">18°C</text>
<text x="64" y="1065" font-size="14" fill="#d8d8d8" textLength="81" lengthAdjust="spacingAndGlyphs">Partly sunny</text>
<!-- Windows -->
<g fill="#31b4f5"><rect x="530" y="1036" width="14" height="14"/><rect x="545" y="1036" width="14" height="14"/><rect x="530" y="1051" width="14" height="14"/><rect x="545" y="1051" width="14" height="14"/></g>
<rect x="576" y="1030" width="274" height="40" rx="20" fill="#4a4946"/>
<circle cx="598" cy="1049" r="7.500" fill="none" stroke="#ececec" stroke-width="1.800"/>
<path d="M603.500 1055l5.500 6" stroke="#ececec" stroke-width="1.800"/>
<text x="622" y="1056" font-size="16" fill="#e8e8e8" textLength="51" lengthAdjust="spacingAndGlyphs">Search</text>

<!-- Watermark -->
<text x="960" y="1062" font-size="72" font-weight="bold" text-anchor="middle" fill="#8e8e8e" opacity=".3" style="font-family:'DejaVu Sans',sans-serif" textLength="230" lengthAdjust="spacingAndGlyphs">خمسات</text>
<g fill="#8e8e8e" opacity=".3"><rect x="988" y="1010" width="12" height="8"/><rect x="1005" y="1010" width="13" height="8"/></g>

<!-- Taskbar icons -->
<g transform="translate(880,1051)"><rect x="-15" y="-15" width="30" height="30" rx="4" fill="#0c0c0c"/><circle r="12" fill="none" stroke="#f2b72a" stroke-width="2"/><circle r="9" fill="none" stroke="#3ac6c0" stroke-width="2"/><circle r="6" fill="none" stroke="#d54fd4" stroke-width="2"/><circle r="3" fill="none" stroke="#f5f5f5" stroke-width="1.500"/><rect x="5" y="-1" width="7" height="12" fill="#0c0c0c"/><path d="M9 0v11" stroke="#29c46a" stroke-width="2"/></g>
<g transform="translate(936,1050)"><path d="M7-15l8 4v22l-8 4-15-13-6 5-4-3 7-7-7-7 4-3 6 5z" fill="#2f9ce6"/><path d="M7-6v12l-8-6z" fill="#1f1f1f"/><path d="M7-15l8 4v22l-8 4z" fill="#3cb0f2"/></g>
<g transform="translate(991,1050)"><circle r="15" fill="url(#ed)"/><ellipse cx="-3" cy="4" rx="10" ry="6" fill="#1f1f1f"/><path d="M-12 9c4 5 14 7 23 0-2 6-8 6-11 6-5 0-9-2-12-6z" fill="#1a6fc0"/><circle cx="-8" cy="7" r="7" fill="#cfcfcf"/><circle cx="-8" cy="5" r="2.500" fill="#8a8a8a"/><path d="M-13 11c2-4 8-4 10 0z" fill="#8a8a8a"/></g>
<g transform="translate(1046,1051)"><path d="M-14 15l3-9c-6-10 1-21 12-21 9 0 15 7 15 15s-7 15-15 15c-3 0-5-1-7-2z" fill="none" stroke="#25d366" stroke-width="3"/><path d="M-5-6c0 7 5 12 11 13l3-3-4-3-2 2c-2-1-4-3-4-5l2-2-3-4z" fill="#25d366"/></g>
<rect x="1039" y="1029" width="35" height="20" rx="9" fill="#4db2ec"/>
<text x="1056.500" y="1044" font-size="14" fill="#111" text-anchor="middle" textLength="26" lengthAdjust="spacingAndGlyphs">99+</text>
<g transform="translate(1100,1050)"><path d="M-15-13h12l3 3h15v24h-30z" fill="#e9a42b"/><rect x="-15" y="-6" width="30" height="20" fill="#f4c63f"/><rect x="-8" y="5" width="16" height="9" rx="1" fill="#2a78c7"/></g>
<g transform="translate(1156,1050)"><circle r="15" fill="#1f7bf2"/><path d="M-8 13l1-6 0 8 4-2z" fill="#1f7bf2"/><path d="M-9 5L-1-5l5 4 6-4-8 10-5-4z" fill="#fff"/></g>
<g transform="translate(1210,1050)"><circle r="15" fill="#5865f2"/><path d="M-9-6c3-2 5-2 6-2l1 1h4l1-1c1 0 3 0 6 2 2 4 3 8 3 12-2 2-4 3-6 3l-1-2c-4 1-6 1-10 0l-1 2c-2 0-4-1-6-3 0-4 1-8 3-12z" fill="#fff"/><circle cx="-4" cy="1" r="2" fill="#5865f2"/><circle cx="4" cy="1" r="2" fill="#5865f2"/></g>
<g transform="translate(1266,1050)"><circle r="15" fill="#1ed760"/><path d="M-9-5c6-2 12-1 18 2M-7 1c5-1 10-1 14 2M-6 6c4-1 8-1 11 1" fill="none" stroke="#111" stroke-width="2.200" stroke-linecap="round"/></g>
<g transform="translate(1321,1050)"><circle cx="-2" cy="-10" r="4" fill="#7b83eb"/><path d="M-9-3H11c3 0 4 2 4 4v8c0 5-5 8-9 8-5 0-9-3-11-7z" fill="#7b83eb"/><rect x="-12" y="-3" width="14" height="14" rx="1.500" fill="#4b53bc"/><text x="-5" y="8" font-size="11" font-weight="bold" class="m w">T</text></g>
<circle cx="1332" cy="1039" r="10" fill="#c42b1c"/>
<text x="1332" y="1045" font-size="15" class="m w">1</text>
<rect x="1351" y="1025" width="50" height="50" rx="5" fill="#2e2e2e"/>
<rect x="1378" y="1035" width="9" height="30" rx="1" fill="url(#pb)"/>
<rect x="1371" y="1045" width="9" height="20" rx="1" fill="#f0bd24"/>
<rect x="1364" y="1052" width="9" height="13" rx="1" fill="#f6d75a"/>
<rect x="1366" y="1071" width="20" height="4" rx="2" fill="#4cc2ff"/>
<g fill="#9a9a9a"><rect x="987" y="1070" width="7" height="4" rx="2"/><rect x="1097" y="1070" width="7" height="4" rx="2"/><rect x="1318" y="1070" width="7" height="4" rx="2"/></g>

<!-- Tray -->
<path d="M1512 1054l6-6 6 6" fill="none" stroke="#f2f2f2" stroke-width="1.800"/>
<rect x="1553" y="1040" width="12" height="20" rx="6" fill="#1f6fe5"/>
<path d="M1556 1046l6 7-3 3v-12l3 3-6 6" fill="none" stroke="#fff" stroke-width="1"/>
<path d="M1590 1043l9-4 9 4v8c0 5-4 9-9 11-5-2-9-6-9-11z" fill="#2f8fd8"/>
<circle cx="1602" cy="1055" r="6" fill="#15664f"/><path d="M1599 1055l2 2 4-4" fill="none" stroke="#fff" stroke-width="1"/>
<text x="1632" y="1056" font-size="15" fill="#f2f2f2" textLength="28" lengthAdjust="spacingAndGlyphs">ENG</text>
<path d="M1700 1046h-14v14h14zM1691 1060v3h8" class="tr"/><rect x="1698" y="1041" width="7" height="18" class="tr"/>
<path d="M1713 1047h4l5-5v17l-5-5h-4z" class="tr"/><path d="M1725 1046c2 3 2 6 0 9M1728 1044c3 4 3 9 0 13" class="tr"/>
<rect x="1744" y="1044" width="24" height="15" rx="3" class="tr"/><rect x="1747" y="1047" width="18" height="9" fill="#5da37b"/>
<path d="M1757 1039v8l-3 1" class="tr"/>
<text x="1792" y="1045" font-size="14" fill="#f2f2f2" textLength="74" lengthAdjust="spacingAndGlyphs">6:02:19 PM</text>
<text x="1789" y="1065" font-size="14" fill="#f2f2f2" textLength="77" lengthAdjust="spacingAndGlyphs">25/02/2026</text>
<path d="M1880 1058c2-2 2-5 2-9 0-4 2-6 5-6s5 2 5 6c0 4 0 7 2 9z" fill="#e8e8e8"/><circle cx="1887" cy="1060" r="2" fill="#e8e8e8"/>
<text x="1887" y="1053" font-size="9" fill="#1f1f1f" text-anchor="middle" font-weight="bold">Z</text>
</svg>
</body>
</html>
